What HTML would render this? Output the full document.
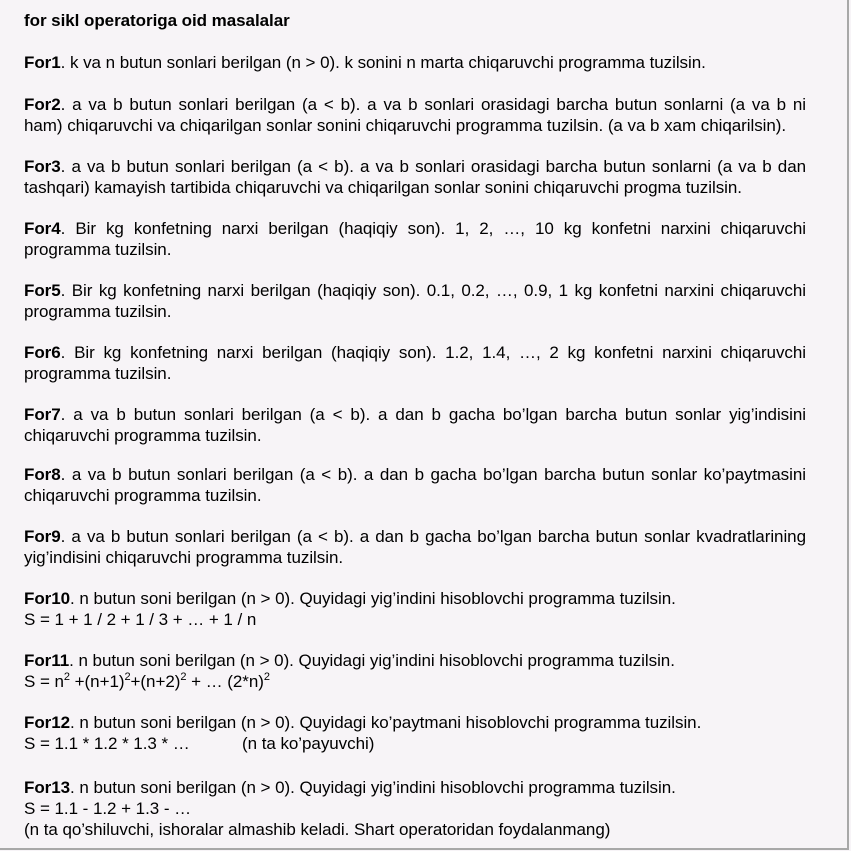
<!DOCTYPE html>
<html><head><meta charset="utf-8"><style>
html,body{margin:0;padding:0;width:851px;height:851px;overflow:hidden;background:#f7f4f7;}
body{font-family:"Liberation Sans",Arial,sans-serif;font-size:17px;color:#000;position:relative;letter-spacing:-0.05px;}
.frame{position:absolute;left:0;top:0;width:847px;height:848px;border-right:2px solid #a8a8a8;border-bottom:2px solid #a8a8a8;}
.p{position:absolute;left:24px;width:782px;line-height:21px;white-space:nowrap;}
.jl{text-align:justify;text-align-last:justify;white-space:normal;}
b{font-weight:bold;}
sup{font-size:11px;line-height:0;vertical-align:7px;}
</style></head><body>
<div class="frame"></div>
<div class="p" style="top:10px"><b>for sikl operatoriga oid masalalar</b></div>
<div class="p" style="top:52px"><b>For1</b>. k va n butun sonlari berilgan (n &gt; 0). k sonini n marta chiqaruvchi programma tuzilsin.</div>
<div class="p" style="top:94px"><div class="jl"><b>For2</b>. a va b butun sonlari berilgan (a &lt; b). a va b sonlari orasidagi barcha butun sonlarni (a va b ni</div><div>ham) chiqaruvchi va chiqarilgan sonlar sonini chiqaruvchi programma tuzilsin. (a va b xam chiqarilsin).</div></div>
<div class="p" style="top:156px"><div class="jl"><b>For3</b>. a va b butun sonlari berilgan (a &lt; b). a va b sonlari orasidagi barcha butun sonlarni (a va b dan</div><div>tashqari) kamayish tartibida chiqaruvchi va chiqarilgan sonlar sonini chiqaruvchi progma tuzilsin.</div></div>
<div class="p" style="top:218px"><div class="jl"><b>For4</b>. Bir kg konfetning narxi berilgan (haqiqiy son). 1, 2, …, 10 kg konfetni narxini chiqaruvchi</div><div>programma tuzilsin.</div></div>
<div class="p" style="top:280px"><div class="jl"><b>For5</b>. Bir kg konfetning narxi berilgan (haqiqiy son). 0.1, 0.2, …, 0.9, 1 kg konfetni narxini chiqaruvchi</div><div>programma tuzilsin.</div></div>
<div class="p" style="top:342px"><div class="jl"><b>For6</b>. Bir kg konfetning narxi berilgan (haqiqiy son). 1.2, 1.4, …, 2 kg konfetni narxini chiqaruvchi</div><div>programma tuzilsin.</div></div>
<div class="p" style="top:404px"><div class="jl"><b>For7</b>. a va b butun sonlari berilgan (a &lt; b). a dan b gacha bo’lgan barcha butun sonlar yig’indisini</div><div>chiqaruvchi programma tuzilsin.</div></div>
<div class="p" style="top:464px"><div class="jl"><b>For8</b>. a va b butun sonlari berilgan (a &lt; b). a dan b gacha bo’lgan barcha butun sonlar ko’paytmasini</div><div>chiqaruvchi programma tuzilsin.</div></div>
<div class="p" style="top:526px"><div class="jl"><b>For9</b>. a va b butun sonlari berilgan (a &lt; b). a dan b gacha bo’lgan barcha butun sonlar kvadratlarining</div><div>yig’indisini chiqaruvchi programma tuzilsin.</div></div>
<div class="p" style="top:588px"><b>For10</b>. n butun soni berilgan (n &gt; 0). Quyidagi yig’indini hisoblovchi programma tuzilsin.<br>S = 1 + 1 / 2 + 1 / 3 + … + 1 / n</div>
<div class="p" style="top:650px"><b>For11</b>. n butun soni berilgan (n &gt; 0). Quyidagi yig’indini hisoblovchi programma tuzilsin.<br>S = n<sup>2</sup> +(n+1)<sup>2</sup>+(n+2)<sup>2</sup> + … (2*n)<sup>2</sup></div>
<div class="p" style="top:712px"><b>For12</b>. n butun soni berilgan (n &gt; 0). Quyidagi ko’paytmani hisoblovchi programma tuzilsin.<br>S = 1.1 * 1.2 * 1.3 * …<span style="position:absolute;left:218px">(n ta ko’payuvchi)</span></div>
<div class="p" style="top:777px"><b>For13</b>. n butun soni berilgan (n &gt; 0). Quyidagi yig’indini hisoblovchi programma tuzilsin.<br>S = 1.1 - 1.2 + 1.3 - …<br>(n ta qo’shiluvchi, ishoralar almashib keladi. Shart operatoridan foydalanmang)</div>
</body></html>
